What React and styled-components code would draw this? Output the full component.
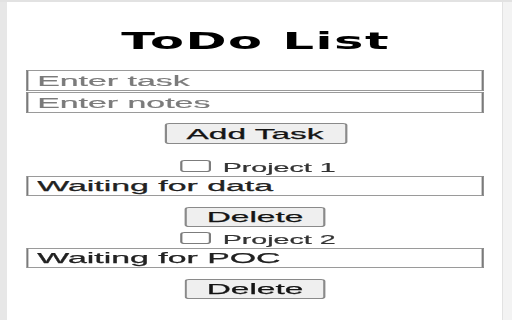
import React from 'react'
import styled, { createGlobalStyle } from 'styled-components'

const tasks = [
  { name: 'Project 1', notes: 'Waiting for data' },
  { name: 'Project 2', notes: 'Waiting for POC' }
]

const GlobalStyle = createGlobalStyle`
  html, body {
    margin: 0;
    padding: 0;
    background: #ffffff;
  }
  body {
    font-family: "Liberation Sans", Arial, sans-serif;
  }
`

const Screen = styled.div`
  width: 512px;
  height: 320px;
  display: flex;
  box-sizing: border-box;
  border-top: 2px solid #e2e2e2;
  overflow: hidden;
`

const LeftEdge = styled.div`
  width: 7px;
  flex: 0 0 7px;
  background: #e7e7e7;
`

const RightEdge = styled.div`
  width: 10px;
  flex: 0 0 10px;
  box-sizing: border-box;
  background: #f3f3f3;
  border-left: 1px solid #e2e2e2;
`

const Popup = styled.div`
  flex: 1;
  display: flex;
  justify-content: center;
  background: #ffffff;
`

// the popup was captured stretched sideways, so the column is drawn narrow and widened
const Column = styled.div`
  width: 208px;
  flex: 0 0 208px;
  display: flex;
  flex-direction: column;
  align-items: center;
  padding-top: 26px;
  transform: scaleX(2.2);
  transform-origin: 50% 0;
`

const Title = styled.h1`
  margin: 0 0 16px;
  padding-left: 0.7px;
  font-family: "DejaVu Sans", Verdana, sans-serif;
  font-size: 22.5px;
  font-weight: bold;
  line-height: 26px;
  letter-spacing: 0.7px;
  color: #000000;
`

const TextField = styled.input`
  display: block;
  box-sizing: border-box;
  width: 100%;
  height: ${p => p.$tall ? 21 : 20}px;
  margin: 0 0 ${p => p.$gap || 0}px;
  padding: 0 4px;
  border: 1px solid #7a7a7a;
  border-top-color: #9a9a9a;
  border-bottom-color: #9a9a9a;
  border-radius: 0;
  background: #ffffff;
  font-family: "Liberation Sans", Arial, sans-serif;
  font-size: 15.4px;
  color: #222222;
  -webkit-text-stroke: 0.25px #222222;
  outline: none;

  &::placeholder {
    color: #7b7b7b;
    -webkit-text-stroke: 0.2px #7b7b7b;
  }
`

const Button = styled.button`
  box-sizing: border-box;
  width: ${p => p.$width}px;
  height: ${p => p.$height || 20}px;
  padding: 0;
  border: 1px solid #8a8a8a;
  border-radius: 2px;
  background: #efefef;
  font-family: "Liberation Sans", Arial, sans-serif;
  font-size: 15.2px;
  line-height: 1;
  color: #151515;
  -webkit-text-stroke: 0.25px #151515;
`

const AddButton = styled(Button)`
  margin-top: 10px;
`

const TaskList = styled.div`
  width: 100%;
  margin-top: 12px;
  display: flex;
  flex-direction: column;
  align-items: center;
`

const Task = styled.div`
  width: 100%;
  display: flex;
  flex-direction: column;
  align-items: center;
  padding-bottom: 1px;
`

const CheckRow = styled.label`
  height: 20px;
  display: flex;
  align-items: center;
  justify-content: center;
  font-family: "Liberation Sans", Arial, sans-serif;
  font-size: 13px;
  color: #333333;
  -webkit-text-stroke: 0.2px #333333;
`

const Check = styled.input`
  appearance: none;
  box-sizing: border-box;
  width: 14px;
  height: 12px;
  margin: 0 5.5px 0 2.5px;
  border: 1px solid #7c7c7c;
  border-radius: 2px;
  background: #ffffff;
`

const Label = styled.span`
  position: relative;
  top: 1px;
`

export default function App () {
  return (
    <>
      <GlobalStyle />
      <Screen>
        <LeftEdge />
        <Popup>
          <Column>
            <Title>ToDo List</Title>
            <TextField $tall $gap={1} placeholder='Enter task' />
            <TextField $tall placeholder='Enter notes' />
            <AddButton $width={83} $height={21}>Add Task</AddButton>
            <TaskList>
              {
                tasks.map((task, index) => (
                  <Task key={index}>
                    <CheckRow>
                      <Check type='checkbox' />
                      <Label>{ task.name }</Label>
                    </CheckRow>
                    <TextField $gap={11} defaultValue={task.notes} />
                    <Button $width={64}>Delete</Button>
                  </Task>
                ))
              }
            </TaskList>
          </Column>
        </Popup>
        <RightEdge />
      </Screen>
    </>
  )
}
